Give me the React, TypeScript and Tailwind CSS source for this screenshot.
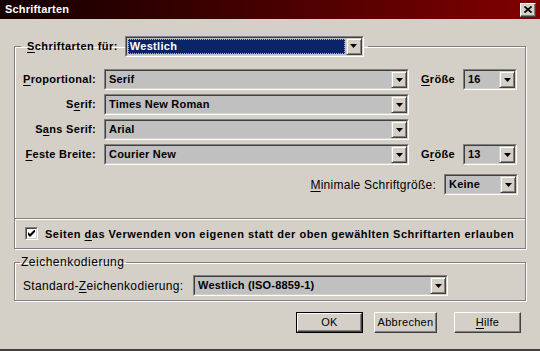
import type { ReactNode } from "react";

function U({ children }: { children: ReactNode }) {
	return <span className="underline decoration-1 underline-offset-[2px]">{children}</span>;
}

function DropButton() {
	return (
		<div className="flex w-[16px] shrink-0 items-center justify-center border border-t-[#d4d0c8] border-l-[#d4d0c8] border-r-[#404040] border-b-[#404040] bg-[#d4d0c8] shadow-[inset_1px_1px_0_#fff,inset_-1px_-1px_0_#808080]">
			<svg width="7" height="4" viewBox="0 0 7 4">
				<path d="M0 0h7L3.5 4z" fill="#000" />
			</svg>
		</div>
	);
}

function Combo({ value, className, selected }: { value: string; className: string; selected?: boolean }) {
	return (
		<div className={`flex h-[21px] shrink-0 border border-t-[#808080] border-l-[#808080] border-r-white border-b-white ${className}`}>
			<div className="flex min-w-0 flex-1 border border-t-[#404040] border-l-[#404040] border-r-[#d4d0c8] border-b-[#d4d0c8] bg-[#c0c0c0]">
				{selected ? (
					<div className="m-px flex flex-1 items-center border border-dotted border-[#b8b8b8] bg-[#0a246a] pl-[1px] font-bold tracking-[0.3px] text-white">
						{value}
					</div>
				) : (
					<div className="flex flex-1 items-center truncate pl-[3px] font-bold tracking-[0.2px] text-black">{value}</div>
				)}
				<DropButton />
			</div>
		</div>
	);
}

function Button({ label, isDefault, className }: { label: ReactNode; isDefault?: boolean; className: string }) {
	return (
		<div className={`flex h-[21px] ${isDefault ? "border border-black" : ""} ${className}`}>
			<div className="flex flex-1 items-center justify-center border border-t-white border-l-white border-r-[#404040] border-b-[#404040] bg-[#d4d0c8] shadow-[inset_-1px_-1px_0_#808080]">
				{label}
			</div>
		</div>
	);
}

function Checkbox() {
	return (
		<div className="flex h-[13px] w-[13px] shrink-0 border border-t-[#808080] border-l-[#808080] border-r-white border-b-white">
			<div className="flex flex-1 items-center justify-center border border-t-[#404040] border-l-[#404040] border-r-[#d4d0c8] border-b-[#d4d0c8] bg-white">
				<svg width="7" height="7" viewBox="0 0 7 7">
					<path d="M0 2v3l2 2 5-5V-1L2 4z" fill="#000" />
				</svg>
			</div>
		</div>
	);
}

export default function App() {
	return (
		<div className="flex h-[351px] w-[540px] flex-col overflow-hidden border-b-2 border-b-[#404040] bg-[#d4d0c8] font-['Liberation_Sans',Arial,sans-serif] text-[11px] text-black">
			{/* title bar */}
			<div className="flex h-[19px] shrink-0 items-center bg-gradient-to-r from-[#140000] to-[#820000] pl-[5px] pr-[4px]">
				<span className="flex-1 text-[11px] font-bold tracking-[0.2px] text-white">Schriftarten</span>
				<div className="flex h-[14px] w-[16px] items-center justify-center border border-t-white border-l-white border-r-[#404040] border-b-[#404040] bg-[#d4d0c8] shadow-[inset_-1px_-1px_0_#808080]">
					<svg width="8" height="7" viewBox="0 0 8 7">
						<path d="M0.5 0.5L7.5 6.5M7.5 0.5L0.5 6.5" stroke="#000" strokeWidth="1.7" />
					</svg>
				</div>
			</div>

			{/* Schriftarten für */}
			<fieldset className="ml-[14px] mt-[17px] h-[213px] w-[512px] border border-[#808080] p-0 shadow-[inset_1px_1px_0_#fff,1px_1px_0_#fff]">
				<legend className="ml-[6px] pl-[6px] pr-[4px]">
					<div className="flex h-[20px] items-center">
						<span className="shrink-0 whitespace-nowrap font-bold tracking-[0.45px]">
							<U>S</U>chriftarten für:
						</span>
						<Combo value="Westlich" className="ml-[7px] w-[239px]" selected />
					</div>
				</legend>
				<div className="flex flex-col pt-[13px]">
					<div className="flex flex-col gap-[4px] font-bold tracking-[0.3px]">
						<div className="flex items-center">
							<span className="w-[81px] whitespace-nowrap text-right">
								<U>P</U>roportional:
							</span>
							<Combo value="Serif" className="ml-[8px] w-[305px]" />
							<span className="ml-[12px] w-[42px]">
								<U>G</U>röße
							</span>
							<Combo value="16" className="w-[54px]" />
						</div>
						<div className="flex items-center">
							<span className="w-[81px] whitespace-nowrap text-right">
								S<U>e</U>rif:
							</span>
							<Combo value="Times New Roman" className="ml-[8px] w-[305px]" />
						</div>
						<div className="flex items-center">
							<span className="w-[81px] whitespace-nowrap text-right">
								S<U>a</U>ns Serif:
							</span>
							<Combo value="Arial" className="ml-[8px] w-[305px]" />
						</div>
						<div className="flex items-center">
							<span className="w-[81px] whitespace-nowrap text-right">
								<U>F</U>este Breite:
							</span>
							<Combo value="Courier New" className="ml-[8px] w-[305px]" />
							<span className="ml-[12px] w-[42px]">
								G<U>r</U>öße
							</span>
							<Combo value="13" className="w-[54px]" />
						</div>
					</div>
					<div className="mt-[9px] flex items-center justify-end pr-[7px]">
						<span className="whitespace-nowrap text-[12px] tracking-[0.25px]">
							<U>M</U>inimale Schriftgröße:
						</span>
						<Combo value="Keine" className="ml-[8px] w-[74px]" />
					</div>
					<div className="mt-[23px] flex h-[30px] border-t border-t-[#808080] pl-[10px] pt-[8px] shadow-[inset_0_1px_0_#fff]">
						<Checkbox />
						<span className="ml-[7px] -mt-[1px] whitespace-nowrap font-bold tracking-[0.5px]">
							Seiten <U>d</U>as Verwenden von eigenen statt der oben gewählten Schriftarten erlauben
						</span>
					</div>
				</div>
			</fieldset>

			{/* Zeichenkodierung */}
			<fieldset className="ml-[14px] mt-[6px] h-[46px] w-[512px] border border-[#808080] p-0 shadow-[inset_1px_1px_0_#fff,1px_1px_0_#fff]">
				<legend className="ml-[5px] pl-[1px] pr-[2px] text-[12px] leading-[14px] tracking-[0.5px]">Zeichenkodierung</legend>
				<div className="flex items-center pl-[8px] pt-[6px]">
					<span className="w-[170px] whitespace-nowrap text-[12px] tracking-[0.35px]">
						Standard-<U>Z</U>eichenkodierung:
					</span>
					<Combo value="Westlich (ISO-8859-1)" className="w-[255px]" />
				</div>
			</fieldset>

			{/* buttons */}
			<div className="mt-[11px] flex text-[11px] tracking-[0.3px]">
				<Button label="OK" isDefault className="ml-[296px] w-[67px]" />
				<Button label="Abbrechen" className="ml-[11px] w-[63px]" />
				<Button
					label={
						<span>
							<U>H</U>ilfe
						</span>
					}
					className="ml-[17px] w-[67px]"
				/>
			</div>
		</div>
	);
}
